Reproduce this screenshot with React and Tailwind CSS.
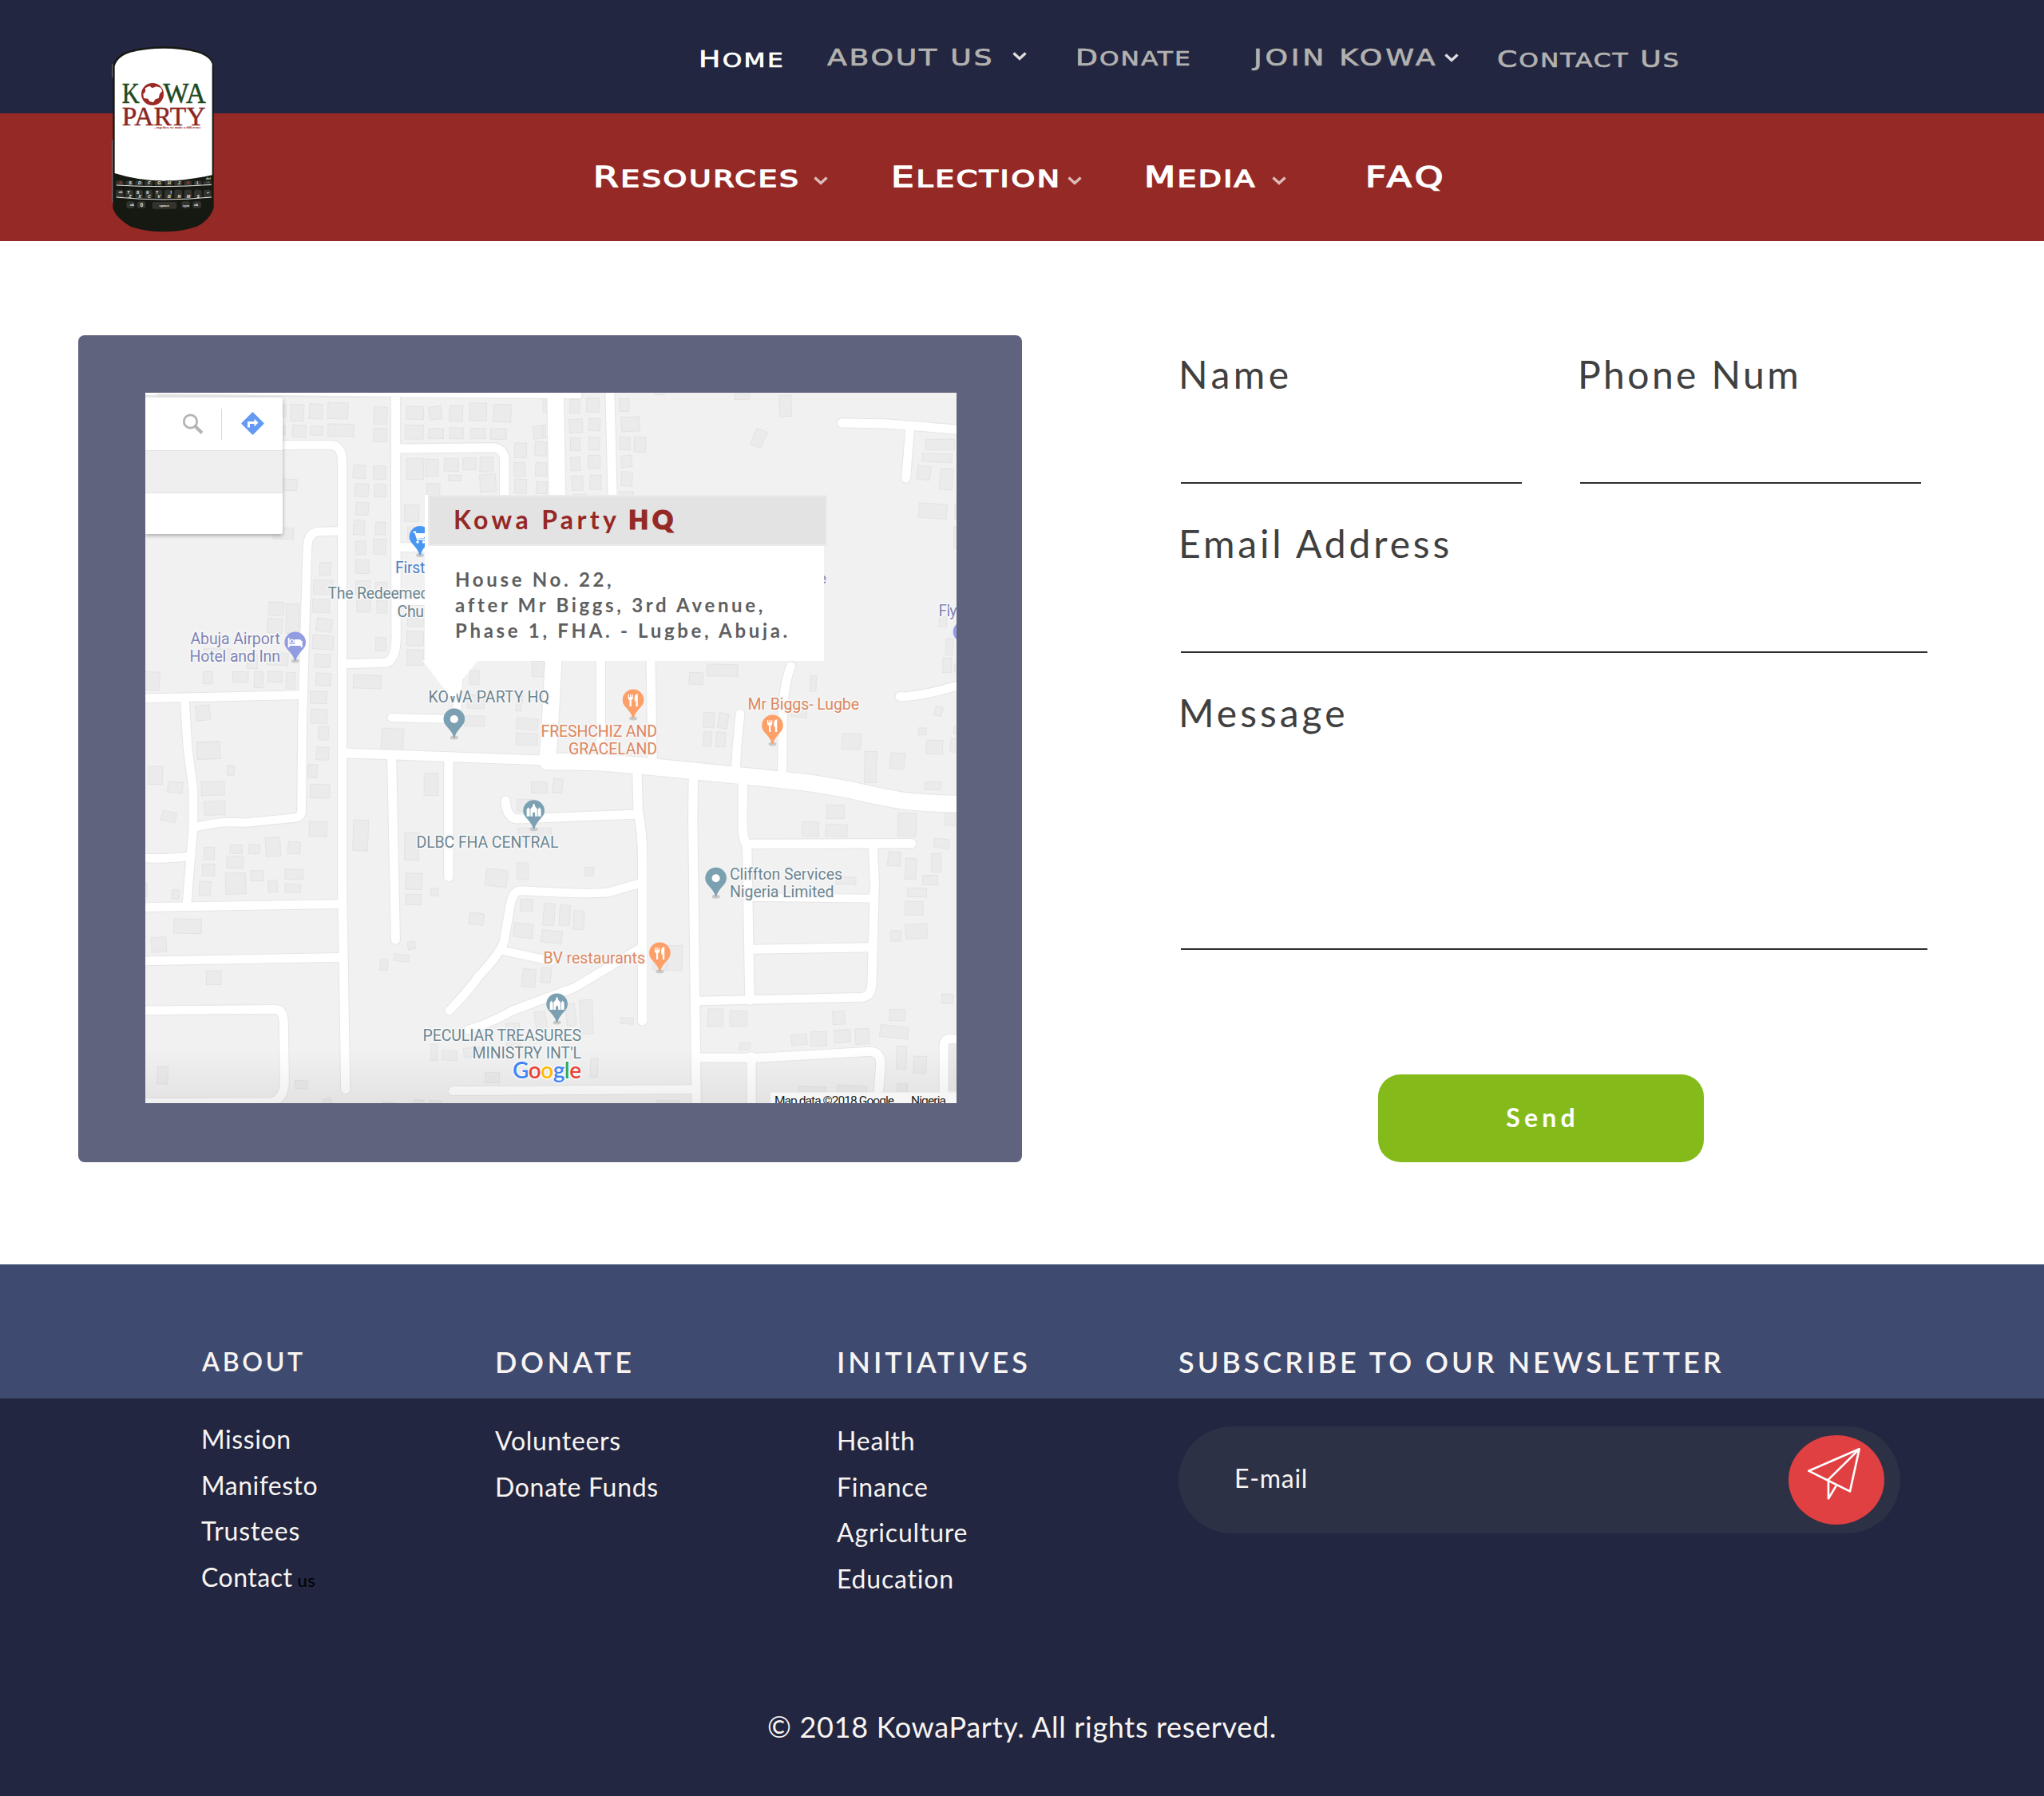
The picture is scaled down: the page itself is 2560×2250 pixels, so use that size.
import React from "react";

/* Street centre lines: [path, width] */
const roads = [
  ["M40 64 L1640 76", 22],
  ["M974 66 L976 980 Q976 1076 934 1081 L780 1085", 33],
  ["M540 263 L735 262 Q780 260 780 330 L780 1900 L792 2685", 32],
  ["M990 276 L1325 272 Q1370 274 1370 320 L1370 470", 33],
  ["M765 586 L695 588 Q655 590 653 650 L635 1300 L632 1640 Q630 1660 605 1664 L430 1682 Q390 1680 370 1680 Q320 1680 250 1698", 31],
  ["M50 1215 L630 1202", 32],
  ["M207 1215 L218 1400 L238 1560 L238 1700 L229 1810 L215 1990", 31],
  ["M50 1814 Q130 1820 225 1808", 32],
  ["M50 2000 L765 1988", 32],
  ["M50 2202 L770 2188", 32],
  ["M50 2388 L535 2383 Q566 2384 567 2430 L570 2650 Q570 2722 520 2732 L50 2734", 32],
  ["M960 1287 L1196 1293 L1200 1180 L1212 1040", 30],
  ["M785 1420 L1520 1448", 35],
  ["M1555 40 L1562 460 L1548 1080 L1532 1380 L1526 1440", 60],
  ["M1526 1452 L1700 1454 L1870 1468 L2230 1505 L2460 1530 Q2560 1545 2640 1562 Q2740 1586 2810 1598 Q2900 1610 3040 1612", 62],
  ["M1753 40 L1763 460 L1720 1075 L1720 1450", 32],
  ["M1902 1060 L1908 1450", 32],
  ["M2597 180 L2750 182 Q2860 190 3040 207", 33],
  ["M2845 195 L2830 388", 31],
  ["M2808 1208 Q2880 1210 3040 1160", 32],
  ["M2411 1094 Q2384 1170 2382 1280 L2380 1490", 32],
  ["M2227 1272 L2215 1400 L2210 1500", 31],
  ["M1852 1480 L1856 1640 Q1872 1720 1872 1820 L1872 2427", 33],
  ["M1852 1650 L1510 1664 L1415 1668 Q1378 1662 1374 1600", 33],
  ["M1862 1910 L1755 1942 Q1700 1954 1430 1937 Q1398 1938 1390 2000 L1368 2130 Q1350 2180 1272 2264 Q1250 2300 1170 2388", 32],
  ["M1366 2163 L1540 2202", 30],
  ["M1870 2150 L1625 2302 L1510 2345 L1400 2388 Q1310 2440 1240 2460", 32],
  ["M2057 1500 L2055 1660 L2068 2760", 33],
  ["M2237 1530 L2236 1690 Q2236 1740 2252 1770 L2262 2350", 33],
  ["M2252 1762 L2850 1760", 34],
  ["M2710 1770 L2716 1910 L2706 2290 Q2704 2335 2670 2338 L2070 2352", 32],
  ["M2260 1962 L2710 1967", 29],
  ["M2265 2158 L2710 2150", 33],
  ["M2070 2565 L2290 2566 L2700 2542 Q2738 2544 2738 2590 L2726 2760", 33],
  ["M2268 2560 L2268 2760", 32],
  ["M1182 2690 L2060 2684", 32],
  ["M3040 2494 L2988 2495 Q2968 2496 2968 2520 L2968 2760", 32],
  ["M960 1430 L974 2122", 32],
  ["M1167 1440 L1167 1886", 33],
  ["M990 647 L1100 647", 32],
  ["M990 850 L1100 850", 28],
];

/* Building footprints per map sheet: [x, y, width, height, tilt] */
const sheets = [
  {
    x: 0, y: 0,
    items: [
      [540,112,36,44,0],[592,110,48,62,2],[661,108,47,56,3],[728,104,73,60,2],[895,120,48,64,3],[545,190,28,34,0],[600,188,48,45,2],[664,192,46,34,2],[728,184,94,46,1],[894,200,48,50,3],
      [1014,118,62,48,1],[1096,118,45,48,-8],[1170,115,48,58,3],[1243,105,62,66,1],[1330,110,64,66,2],[1009,188,66,52,1],[1094,200,54,38,1],[1171,198,49,41,1],[1247,200,53,38,1],[1320,201,57,40,1],[1475,190,44,48,-6],
      [1407,255,43,55,2],[1481,250,42,53,4],[820,338,44,50,4],[893,341,46,51,1],[1014,313,62,79,1],[1083,316,46,64,1],[1151,313,52,48,2],[1219,311,48,45,1],[1281,308,47,55,2],[1166,376,47,21,1],[1281,373,58,66,-3],[1405,328,40,52,-2],[1483,329,40,50,2],[1088,407,47,50,2],[1407,391,43,54,2],[1486,400,38,46,3],
      [563,391,53,42,2],[826,408,49,48,3],[897,410,42,48,0],[830,478,45,48,4],[1006,487,53,63,1],[530,574,72,42,1],[821,545,40,55,2],[901,553,36,46,2],[828,624,38,50,-3],[893,616,46,57,2],[828,694,50,51,2],[698,704,40,48,2],[1018,570,50,46,0],
      [676,770,69,54,1],[829,773,52,50,0],[901,778,42,50,0],[672,842,62,50,2],[833,845,49,45,0],[906,848,37,46,-1],[513,853,55,51,3],[576,860,47,111,1],[508,915,54,54,4],[687,915,56,48,9],[672,978,76,52,4],[902,986,37,50,1],[681,1049,56,49,3],[1017,910,60,34,0],[1015,963,61,54,1],[1015,1032,60,58,1],
      [278,1028,96,42,1],[434,1052,38,50,1],[507,1044,76,46,3],[50,1115,66,68,3],[274,1114,34,46,1],[382,1115,56,38,1],[460,1115,32,60,1],[510,1113,52,40,2],[576,1117,33,60,2],[684,1120,54,47,4],[821,1128,101,49,2],[664,1188,60,46,1],[667,1256,58,52,2],[249,1241,50,56,-6],[693,1321,37,50,2],[923,1328,79,80,3],[1244,1110,34,52,2],[1235,1202,62,50,2],[1225,1281,72,38,1],[1470,1075,44,58,0],[1414,1204,20,58,8],[1414,1290,77,42,6],[1412,1346,78,45,1],[254,1378,80,65,-2],
    ],
  },
  {
    x: 1510, y: 0,
    items: [
      [98,92,35,50,1],[159,86,46,53,2],[278,88,35,48,1],[96,166,48,50,-4],[167,162,41,47,3],[285,157,66,54,-3],[100,236,35,48,1],[167,233,39,48,2],[280,233,37,48,1],[332,233,42,56,1],[101,309,34,50,-3],[164,301,44,50,0],[285,302,38,43,-6],[105,379,40,54,-2],[171,376,41,54,2],[285,363,40,54,3],[278,437,50,20,3],[110,448,46,20,0],[697,60,54,32,1],[407,60,34,14,0],[860,76,43,79,-2],[764,205,42,65,24],[0,85,14,54,0],[0,190,10,46,0],
      [1392,241,104,40,0],[1380,295,108,32,2],[1361,342,48,50,8],[1444,351,46,80,4],[1367,483,102,55,4],[1498,486,40,55,0],[1494,570,40,82,0],[1441,908,27,37,1],[1465,990,26,62,4],[1454,1063,32,55,2],[1496,1086,20,30,0],
      [532,1118,50,44,2],[597,1087,111,44,1],[972,1130,22,58,3],[584,1268,39,56,3],[638,1270,34,57,9],[904,1240,56,45,8],[1425,1246,27,34,12],[1366,1326,28,26,3],[1088,1348,68,58,3],[584,1340,29,54,3],[630,1342,33,55,2],[1394,1372,60,52,1],[1482,1367,40,50,6],[1494,1322,30,26,0],
    ],
  },
  {
    x: 0, y: 1350,
    items: [
      [252,30,84,62,-2],[362,118,25,36,3],[268,177,84,52,-2],[279,251,75,52,-2],[74,121,53,67,0],[146,178,54,41,7],[124,290,52,38,12],[687,48,44,48,4],[656,113,33,50,3],[664,188,70,51,1],[660,328,64,56,2],[820,322,54,115,2],[1078,146,51,84,0],[1007,369,52,103,1],
      [278,424,37,47,0],[372,415,44,33,3],[440,414,40,35,2],[502,388,53,70,-3],[583,404,44,45,3],[360,458,60,45,1],[271,488,45,44,1],[356,521,73,79,-2],[447,512,46,38,1],[572,507,66,38,1],[260,553,42,53,3],[511,549,33,44,-4],[572,563,57,31,2],[161,584,26,34,6],[40,558,31,52,0],
      [168,694,100,54,1],[86,763,54,55,-4],[286,889,54,51,0],[108,1248,38,66,2],[608,1301,46,31,2],[716,1368,26,36,-22],[1011,522,59,61,2],[1011,601,57,39,2],[1102,578,28,29,3],[1241,672,53,43,8],[1302,508,78,63,7],[1415,483,42,62,0],[1468,179,57,42,0],[1548,168,30,52,5],[1416,244,60,46,2],[1420,352,120,50,0],[1246,383,10,14,0],
      [1018,778,27,30,-12],[969,827,54,26,6],[918,846,28,40,4],[1428,620,45,45,1],[1512,636,40,82,4],[1404,711,69,52,7],[1505,738,74,46,7],[1435,882,48,68,5],[1503,877,36,56,5],[1482,1042,40,66,-8],[1376,1086,50,84,-3],[1102,1164,25,62,1],[1143,1189,54,36,3],[1222,1178,60,34,-5],[1300,1271,52,38,0],[1042,1374,35,20,4],[1098,1376,44,20,4],[928,1382,44,20,4],
    ],
  },
  {
    x: 1510, y: 1350,
    items: [
      [1170,64,43,117,1],[1263,70,52,60,6],[1390,179,57,29,1],[37,167,34,52,6],[1032,266,64,50,1],[942,329,61,54,0],[1028,338,78,46,2],[1291,297,66,86,1],[1463,292,50,50,3],[1423,393,54,34,6],[1255,442,46,52,5],[1318,466,40,79,3],[1413,448,34,69,0],[1381,530,54,36,2],[1326,578,69,33,2],[1317,628,65,51,1],[1319,713,78,55,-3],[1264,737,38,40,0],
      [151,499,33,32,2],[1066,537,72,26,1],[60,642,38,76,4],[111,663,38,70,2],[400,856,48,30,4],[452,794,54,94,1],[283,1065,46,23,4],[84,1012,34,84,-6],[135,998,46,128,-2],[173,1218,26,70,2],[600,1032,54,66,1],[680,1040,62,57,1],[1054,1040,44,50,-4],[1260,1034,57,42,2],[1450,976,42,36,4],[904,1128,56,40,-6],[974,1118,58,53,1],[1060,1110,58,48,-4],[1136,1106,50,58,-3],[1226,1096,102,44,6],[715,1160,38,25,1],[1286,1172,36,86,2],[1348,1210,46,64,2],[1288,1314,37,40,2],[930,1324,98,40,2],[1070,1320,107,40,2],[1476,1162,50,172,0],[1494,1184,30,52,2],[1494,1250,30,50,2],[413,1376,84,30,1],
    ],
  },
];

const slate = "#6d8691";
const orange = "#dc8760";
const violet = "#8085b6";

/* Place names: [text, x, baseline, width, colour, anchor] */
const places = [
  ["Abuja Airport", 351, 807, 112.5, violet, "end"],
  ["Hotel and Inn", 351, 829, 113.5, violet, "end"],
  ["First Choice", 495, 718, 100, "#4a7fc7", "start"],
  ["The Redeemed", 410.5, 750, 127, slate, "start"],
  ["Church", 497.5, 772.5, 60, slate, "start"],
  ["KOWA PARTY HQ", 536.5, 880, 151.5, slate, "start"],
  ["FRESHCHIZ AND", 823, 923, 145.5, orange, "end"],
  ["GRACELAND", 823, 945, 111, orange, "end"],
  ["Mr Biggs- Lugbe", 936.5, 889, 139.5, orange, "start"],
  ["DLBC FHA CENTRAL", 521.5, 1062, 178, slate, "start"],
  ["Cliffton Services", 914, 1102, 141, slate, "start"],
  ["Nigeria Limited", 914, 1124, 130.5, slate, "start"],
  ["BV restaurants", 680.5, 1207, 127.5, orange, "start"],
  ["PECULIAR TREASURES", 728, 1304, 198.5, slate, "end"],
  ["MINISTRY INT'L", 728, 1326, 136.5, slate, "end"],
  ["Fly", 1175.5, 771.5, 23, violet, "start"],
];

function Pin({ x, y, color, children }) {
  return (
    <g transform={`translate(${x} ${y})`}>
      <ellipse cx="0" cy="23" rx="5" ry="2.5" fill="#c9c9c9" />
      <path
        d="M0 -13.500 A13.300 13.300 0 0 1 13.300 0 C13.300 6 9 9 5.500 13.500 C3 16.500 1.500 19 .6 23 L-.6 23 C-1.500 19 -3 16.500 -5.500 13.500 C-9 9 -13.300 6 -13.300 0 A13.300 13.300 0 0 1 0 -13.500Z"
        fill={color}
      />
      {children}
    </g>
  );
}

const Fork = () => (
  <g fill="#fff">
    <path d="M-6.500 -7 h1.200 v3 h1.300 v-3 h1.300 v3 h1.300 v-3 h1.200 v4.500 q0 2 -2 2.500 v8 h-2.300 v-8 q-2 -.5 -2 -2.500z" />
    <path d="M1.800 -4 Q2.500 -7.500 5.800 -7.700 V8 H3.400 V1.500 H1.800z" />
  </g>
);

const Church = () => (
  <g fill="#fff">
    <path d="M-9 7 V-1.500 L-7 -4.500 L-5 -1.500 V7z" />
    <path d="M9 7 V-1.500 L7 -4.500 L5 -1.500 V7z" />
    <path d="M-4.200 7 V-2.500 L-1.500 -5.500 L-1 -8.500 H1 L1.500 -5.500 L4.200 -2.500 V7 H1.500 V3 Q0 .8 -1.500 3 V7z" />
  </g>
);

function StreetMap() {
  return (
    <>
      <svg className="absolute inset-0 h-full w-full" viewBox="64 66 2950 2670" preserveAspectRatio="none">
        <rect x="64" y="66" width="2950" height="2670" fill="#f1f1f1" />
        {sheets.map((s) => (
          <g key={`${s.x}-${s.y}`} transform={`translate(${s.x} ${s.y})`} fill="#ebebeb" stroke="#e3e3e3" strokeWidth="3">
            {s.items.map(([x, y, w, h, r], i) => (
              <rect key={i} x={x} y={y} width={w} height={h} transform={`rotate(${r} ${x + w / 2} ${y + h / 2})`} />
            ))}
          </g>
        ))}
        <g fill="none" stroke="#e6e6e6" strokeLinecap="round" strokeLinejoin="round">
          {roads.map(([d, w]) => (
            <path key={d} d={d} strokeWidth={w + 6.5} />
          ))}
        </g>
        <g fill="none" stroke="#fff" strokeLinecap="round" strokeLinejoin="round">
          {roads.map(([d, w]) => (
            <path key={d} d={d} strokeWidth={w} />
          ))}
        </g>
        <path d="M106 70 L1100 82 L106 82Z" fill="#e6e6e6" />
      </svg>

      <svg className="absolute inset-0 h-full w-full" viewBox="182 492 1016 890">
        <defs>
          <linearGradient id="shade" x1="0" y1="0" x2="0" y2="1">
            <stop offset="0" stopColor="#000" stopOpacity="0" />
            <stop offset="1" stopColor="#000" stopOpacity="0.06" />
          </linearGradient>
        </defs>
        <rect x="182" y="1315" width="1016" height="67" fill="url(#shade)" />
        <g fontFamily="Roboto, sans-serif" fontSize="19.500" stroke="#f8f8f8" strokeWidth="3" strokeLinejoin="round">
          {places.map(([t, x, y, w, c, a]) => (
            <text key={t} x={x} y={y} textLength={w} textAnchor={a} fill={c} className="[paint-order:stroke]">
              {t}
            </text>
          ))}
        </g>

        <Pin x={369.700} y={805} color="#929ce0">
          <path d="M-8 -6 V6 M8 -2 V6 M-8 3 H8" stroke="#fff" strokeWidth="2" fill="none" />
          <path d="M-1 -4 H5 Q8 -4 8 0 V2 H-1z" fill="#fff" />
          <circle cx="-4" cy="-1.500" r="2.200" fill="none" stroke="#fff" strokeWidth="1.200" />
        </Pin>
        <Pin x={526} y={672.500} color="#4a97f2">
          <path d="M-8.500 -6 H-6 L-3 3 H6" stroke="#fff" strokeWidth="2" fill="none" />
          <path d="M-5.500 -4.500 H8 L5 1.500 H-3.500z" fill="#fff" />
          <circle cx="-3" cy="6.500" r="1.700" fill="#fff" />
          <circle cx="4.500" cy="6.500" r="1.700" fill="#fff" />
        </Pin>
        <Pin x={568.800} y={901} color="#7ba0b1"><circle r="5" fill="#fff" /></Pin>
        <Pin x={896.600} y={1100.300} color="#7ba0b1"><circle r="5" fill="#fff" /></Pin>
        <Pin x={668.600} y={1015.700} color="#7ba0b1"><Church /></Pin>
        <Pin x={697.600} y={1258} color="#7ba0b1"><Church /></Pin>
        <Pin x={793} y={877} color="#fd9f68"><Fork /></Pin>
        <Pin x={967.500} y={909} color="#fd9f68"><Fork /></Pin>
        <Pin x={826.400} y={1194} color="#fd9f68"><Fork /></Pin>
        <Pin x={1207} y={791.700} color="#929ce0" />

        <text x="642" y="1351" textLength="86" fontFamily="Lato, sans-serif" fontSize="28" fontWeight="600" stroke="#fafafa" strokeWidth="3" className="[paint-order:stroke]">
          <tspan fill="#4285f4">G</tspan>
          <tspan fill="#ea4335">o</tspan>
          <tspan fill="#fbbc05">o</tspan>
          <tspan fill="#4285f4">g</tspan>
          <tspan fill="#34a853">l</tspan>
          <tspan fill="#ea4335">e</tspan>
        </text>

        <rect x="965" y="1368.500" width="233" height="14" fill="#f6f6f6" />
        <g fontFamily="Roboto, sans-serif" fontSize="15.500" fill="#1c1c1c">
          <text x="970" y="1384" textLength="150">Map data ©2018 Google</text>
          <text x="1141" y="1384" textLength="44">Nigeria</text>
        </g>

        <path d="M529 827 H599 L578 853 L571 872 H563 Z" fill="#fff" />
        <text x="1025" y="731" fontFamily="Roboto, sans-serif" fontSize="19" fill={violet}>e</text>
      </svg>
    </>
  );
}

function SearchPanel() {
  return (
    <div className="absolute left-0 top-[6px] flex h-[171px] w-[171.500px] flex-col rounded-r-[2px] bg-white shadow-[0_2px_5px_rgba(0,0,0,0.3)]">
      <div className="flex h-[66px] items-center">
        <svg className="ml-[45px] h-[28px] w-[28px]" viewBox="0 0 28 28" fill="none" stroke="#b4b4b4">
          <circle cx="11.500" cy="11" r="8.200" strokeWidth="2.800" />
          <path d="M17.500 17 L26 25.500" strokeWidth="4" />
        </svg>
        <div className="ml-[22px] h-[39px] w-px bg-[#d9d9d9]" />
        <svg className="ml-[24px] mb-[1px] h-[29px] w-[29px]" viewBox="0 0 29 29">
          <path d="M14.500 1 L28 14.500 L14.500 28 L1 14.500Z" fill="#659af4" stroke="#659af4" strokeWidth="1.500" strokeLinejoin="round" />
          <path d="M9.500 19.500 V13.500 H19" fill="none" stroke="#fff" strokeWidth="3" />
          <path d="M16.500 8.800 L21.500 13.500 L16.500 18.200Z" fill="#fff" />
        </svg>
      </div>
      <div className="h-[54px] border-y border-[#e2e2e2] bg-[#efefef]" />
    </div>
  );
}

function MapPopup() {
  return (
    <div className="absolute left-[350px] top-[128px] h-[208px] w-[500px] bg-white text-[#5f5f5f]">
      <div className="ml-1 flex h-16 w-[500px] border-2 border-[#ebebeb] bg-[#e3e3e3] pl-[30px] text-[32px] leading-[58px] text-[#952926]">
        <span className="font-bold tracking-[4.360px]">Kowa Party</span>
        <span className="ml-[11px] font-extrabold tracking-[5px] [-webkit-text-stroke:1.200px]">HQ</span>
      </div>
      <p className="mt-[26px] h-[92px] overflow-hidden whitespace-nowrap pl-[38px] text-2xl font-bold leading-8 tracking-[3.680px]">
        House No. 22,
        <br />
        after Mr Biggs, 3rd Avenue,
        <br />
        Phase 1, FHA. - Lugbe, Abuja.
      </p>
    </div>
  );
}

function PhoneLogo() {
  const keys1 = [["A", 152, "#b8322c"], ["S", 189], ["D", 225], ["F", 261], ["G", 298], ["H", 336], ["J", 373], ["K", 407, "#b8322c"], ["L", 444]];
  const keys2 = [["Z", 189], ["X", 225], ["C", 261], ["V", 297], ["B", 336], ["N", 373], ["M", 408], ["$", 445]];
  const nums = [["7", 183], ["8", 218], ["9", 254], ["?", 290], ["!", 343]];
  return (
    <svg className="absolute left-[140px] top-[56.670px] h-[235.330px] w-[128.670px]" viewBox="120 80 386 706">
      <path d="M124 160 Q126 128 165 108 Q230 84 315 84 Q400 84 465 108 Q501 130 503 160 V690 Q490 735 440 760 Q380 780 315 780 Q250 780 190 760 Q132 725 124 690Z" fill="#161812" />
      <path d="M131 158 Q140 122 190 106 Q250 91 315 91 Q380 91 440 106 Q490 122 497 150 V567 Q400 588 315 589 Q215 587 131 560Z" fill="#fff" />
      <path d="M122 150 V200 M122 436 V670" stroke="#77777c" strokeWidth="3" />
      <g fontFamily="'Liberation Serif', serif">
        <text x="158" y="297" fontSize="108" textLength="66" lengthAdjust="spacingAndGlyphs" fill="#1e4a22" stroke="#1e4a22" strokeWidth="1.500">K</text>
        <text x="313" y="297" fontSize="108" textLength="160" lengthAdjust="spacingAndGlyphs" fill="#1e4a22" stroke="#1e4a22" strokeWidth="1.500">WA</text>
        <text x="158" y="380" fontSize="103" textLength="314" lengthAdjust="spacingAndGlyphs" fill="#8c2723" stroke="#8c2723" strokeWidth="1.500">PARTY</text>
        <text x="278" y="392" fontSize="14" fontWeight="700" textLength="177" lengthAdjust="spacingAndGlyphs" fill="#8c2723">...together, we make a difference</text>
      </g>
      <circle cx="273" cy="263" r="42" fill="#9b2924" />
      <path d="M246 240 L262 232 L272 240 L288 234 L303 238 L310 250 L300 262 L296 278 L284 282 L276 294 L262 290 L256 280 L240 278 L238 262 L246 254Z" fill="#fff" />
      <g fill="#33342f">
        {[150, 187, 223, 259, 296, 333, 370, 407, 444, 480].map((x) => (
          <g key={x}>
            <rect x={x - 15} y="588" width="29" height="20" rx="6" />
            <rect x={x - 15} y="622" width="29" height="32" rx="8" />
          </g>
        ))}
        <rect x="175" y="666" width="30" height="26" rx="8" />
        <rect x="215" y="666" width="32" height="26" rx="8" />
        <rect x="272" y="668" width="92" height="26" rx="6" />
        <rect x="382" y="666" width="32" height="26" rx="8" />
        <rect x="424" y="666" width="32" height="26" rx="8" />
      </g>
      <path d="M137 605 Q315 616 495 603 M137 650 Q315 668 495 650" fill="none" stroke="#e4e4e0" strokeWidth="3" />
      <g fontFamily="'Liberation Sans', sans-serif" fontWeight="700" fill="#e9e9e6" textAnchor="middle">
        <g fontSize="16" fontStyle="italic">
          {keys1.map(([t, x, c]) => (
            <text key={t} x={x} y="601" fill={c || "#e9e9e6"}>{t}</text>
          ))}
          {keys2.map(([t, x]) => (
            <text key={t} x={x} y="652">{t}</text>
          ))}
        </g>
        <g fontSize="18">
          {nums.map(([t, x]) => (
            <text key={t} x={x} y="637">{t}</text>
          ))}
          <text x="232" y="685" fontSize="20">0</text>
        </g>
        <g fontSize="12">
          <text x="483" y="584">del</text>
          <text x="483" y="597">←</text>
          <text x="153" y="635">alt</text>
          <text x="483" y="637">↵</text>
          <text x="317" y="685" fontSize="13">space</text>
          <text x="399" y="685">sym</text>
          <text x="196" y="684">aA</text>
          <text x="437" y="684">aA</text>
        </g>
      </g>
    </svg>
  );
}

function Chevron({ className }) {
  return (
    <svg className={className} viewBox="0 0 18 11" fill="none" stroke="currentColor" strokeWidth="3.400">
      <path d="M1.500 1.500 L9 8.500 L16.500 1.500" />
    </svg>
  );
}

const topItem = "origin-left scale-x-125 justify-self-start whitespace-nowrap text-[29px] [-webkit-text-stroke:0.700px]";
const mainItem = "origin-left scale-x-130 justify-self-start whitespace-nowrap text-[35px] [-webkit-text-stroke:1.400px]";

function Header() {
  return (
    <header className="relative font-['DejaVu_Sans',sans-serif]">
      <nav className="grid h-[142px] grid-cols-[161px_232px_79px_223px_239px_66px_1fr] items-start bg-[#222640] pl-[875px] pt-[52px] leading-10 text-[#b2b1af]">
        <a className={`${topItem} mt-0.5 tracking-[1.900px] text-white`}>H<span className="text-[25px]">OME</span></a>
        <a className={`${topItem} tracking-[2.200px]`}>ABOUT US</a>
        <Chevron className="mt-[13px] h-[11px] w-[18px] text-[#dededf]" />
        <a className={`${topItem} tracking-[1.600px]`}>D<span className="text-[25px]">ONATE</span></a>
        <a className={`${topItem} tracking-[3px]`}>JOIN KOWA</a>
        <Chevron className="mt-[15px] h-[11px] w-[18px] text-[#dededf]" />
        <a className={`${topItem} mt-0.5 tracking-[1.600px]`}>C<span className="text-[25px]">ONTACT</span> U<span className="text-[25px]">S</span></a>
      </nav>
      <nav className="grid h-[160px] grid-cols-[276px_97px_221px_96px_160px_117px_1fr] items-start bg-[#952926] pl-[743px] pt-14 leading-[48px] text-white">
        <a className={`${mainItem} tracking-[2.100px]`}>R<span className="text-[29px]">ESOURCES</span></a>
        <Chevron className="mt-[23px] h-[11px] w-[18px] text-[#dcbcba]" />
        <a className={`${mainItem} tracking-[2.100px]`}>E<span className="text-[29px]">LECTION</span></a>
        <Chevron className="mt-[23px] h-[11px] w-[18px] text-[#dcbcba]" />
        <a className={`${mainItem} tracking-[1.800px]`}>M<span className="text-[29px]">EDIA</span></a>
        <Chevron className="mt-[23px] h-[11px] w-[18px] text-[#dcbcba]" />
        <a className={`${mainItem} tracking-[3.600px]`}>FAQ</a>
      </nav>
      <PhoneLogo />
    </header>
  );
}

function ContactForm() {
  const label = "block text-5xl leading-[60px] whitespace-nowrap";
  const line = "ml-[3px] block resize-none border-b-2 border-[#2e2e2e] bg-transparent outline-none";
  return (
    <form className="ml-[196px] mt-[137px] w-[942px] text-[#404040]">
      <div className="flex gap-[70px]">
        <label>
          <span className={`${label} tracking-[4.500px]`}>Name</span>
          <input className={`${line} h-[107px] w-[427px]`} />
        </label>
        <label>
          <span className={`${label} tracking-[3.400px]`}>Phone Num</span>
          <input className={`${line} h-[107px] w-[427px]`} />
        </label>
      </div>
      <label className="mt-[45px] block">
        <span className={`${label} tracking-[3.850px]`}>Email Address</span>
        <input className={`${line} h-[107px] w-[935px]`} />
      </label>
      <label className="mt-[45px] block">
        <span className={`${label} tracking-[4px]`}>Message</span>
        <textarea className={`${line} h-[267px] w-[935px]`} />
      </label>
      <button type="button" className="ml-[250px] mt-[156px] block h-[110px] w-[408px] rounded-[28px] bg-[#84bb1a] pb-0.5 pl-1 text-[32px] font-bold tracking-[5.200px] text-white">
        Send
      </button>
    </form>
  );
}

function FooterList({ items, className }) {
  return (
    <ul className={`text-[32px] leading-[57.600px] ${className}`}>
      {items.map((t) => (
        <li key={t}>{t}</li>
      ))}
    </ul>
  );
}

function Footer() {
  return (
    <footer className="text-[#f8f4f2]">
      <div className="grid h-[168px] grid-cols-[367px_428px_428px_1fr] items-start bg-[#3e4a6f] pl-[253px] pt-[98px] text-4xl font-semibold leading-[48px]">
        <h2 className="text-[32px] tracking-[3.680px]">ABOUT</h2>
        <h2 className="tracking-[4.550px]">DONATE</h2>
        <h2 className="tracking-[3.950px]">INITIATIVES</h2>
        <h2 className="tracking-[4px]">SUBSCRIBE TO OUR NEWSLETTER</h2>
      </div>
      <div className="flex h-[498px] flex-col bg-[#222640]">
        <div className="grid h-[387px] grid-cols-[368px_428px_427px_1fr] items-start pl-[252px]">
          <div className="pt-[22px] text-[32px] leading-[57.600px]">
            <ul>
              <li className="tracking-[0.600px]">Mission</li>
              <li className="tracking-[0.500px]">Manifesto</li>
              <li className="tracking-[0.800px]">Trustees</li>
              <li className="tracking-[0.500px]">
                Contact<span className="ml-[6px] text-[22px] text-black">us</span>
              </li>
            </ul>
          </div>
          <FooterList className="pt-6 tracking-[0.680px]" items={["Volunteers", "Donate Funds"]} />
          <FooterList className="pt-6 tracking-[0.800px]" items={["Health", "Finance", "Agriculture", "Education"]} />
          <form className="ml-[1px] mt-[35px] flex h-[134px] w-[904px] items-center rounded-full bg-[#2c3145] pr-[20px]">
            <input
              placeholder="E-mail"
              className="w-[764px] bg-transparent pb-1 pl-[70px] text-[32px] tracking-[0.700px] outline-none placeholder:text-[#f8f4f2]"
            />
            <button type="button" className="flex h-[112px] w-[120px] shrink-0 rounded-[50%] bg-[#e04042]">
              <svg className="h-[112px] w-[120px]" viewBox="60 53 360 336" fill="none" stroke="#fff" strokeWidth="8" strokeLinejoin="round">
                <path d="M326 105 L136 187 L291 264 Z" />
                <path d="M326 105 L210 220 V291 L241 240" />
              </svg>
            </button>
          </form>
        </div>
        <p className="text-center text-4xl leading-[48px] tracking-[0.680px]">© 2018 KowaParty. All rights reserved.</p>
      </div>
    </footer>
  );
}

export default function App() {
  return (
    <div className="w-[2560px] overflow-hidden bg-white font-['Lato',sans-serif]">
      <Header />
      <main className="flex h-[1282px] items-start">
        <section className="ml-[98px] mt-[118px] h-[1036px] w-[1182px] rounded-lg bg-[#5f637d] pl-[84px] pt-[72px]">
          <div className="relative h-[890px] w-[1016px] overflow-hidden">
            <StreetMap />
            <SearchPanel />
            <MapPopup />
          </div>
        </section>
        <ContactForm />
      </main>
      <Footer />
    </div>
  );
}
